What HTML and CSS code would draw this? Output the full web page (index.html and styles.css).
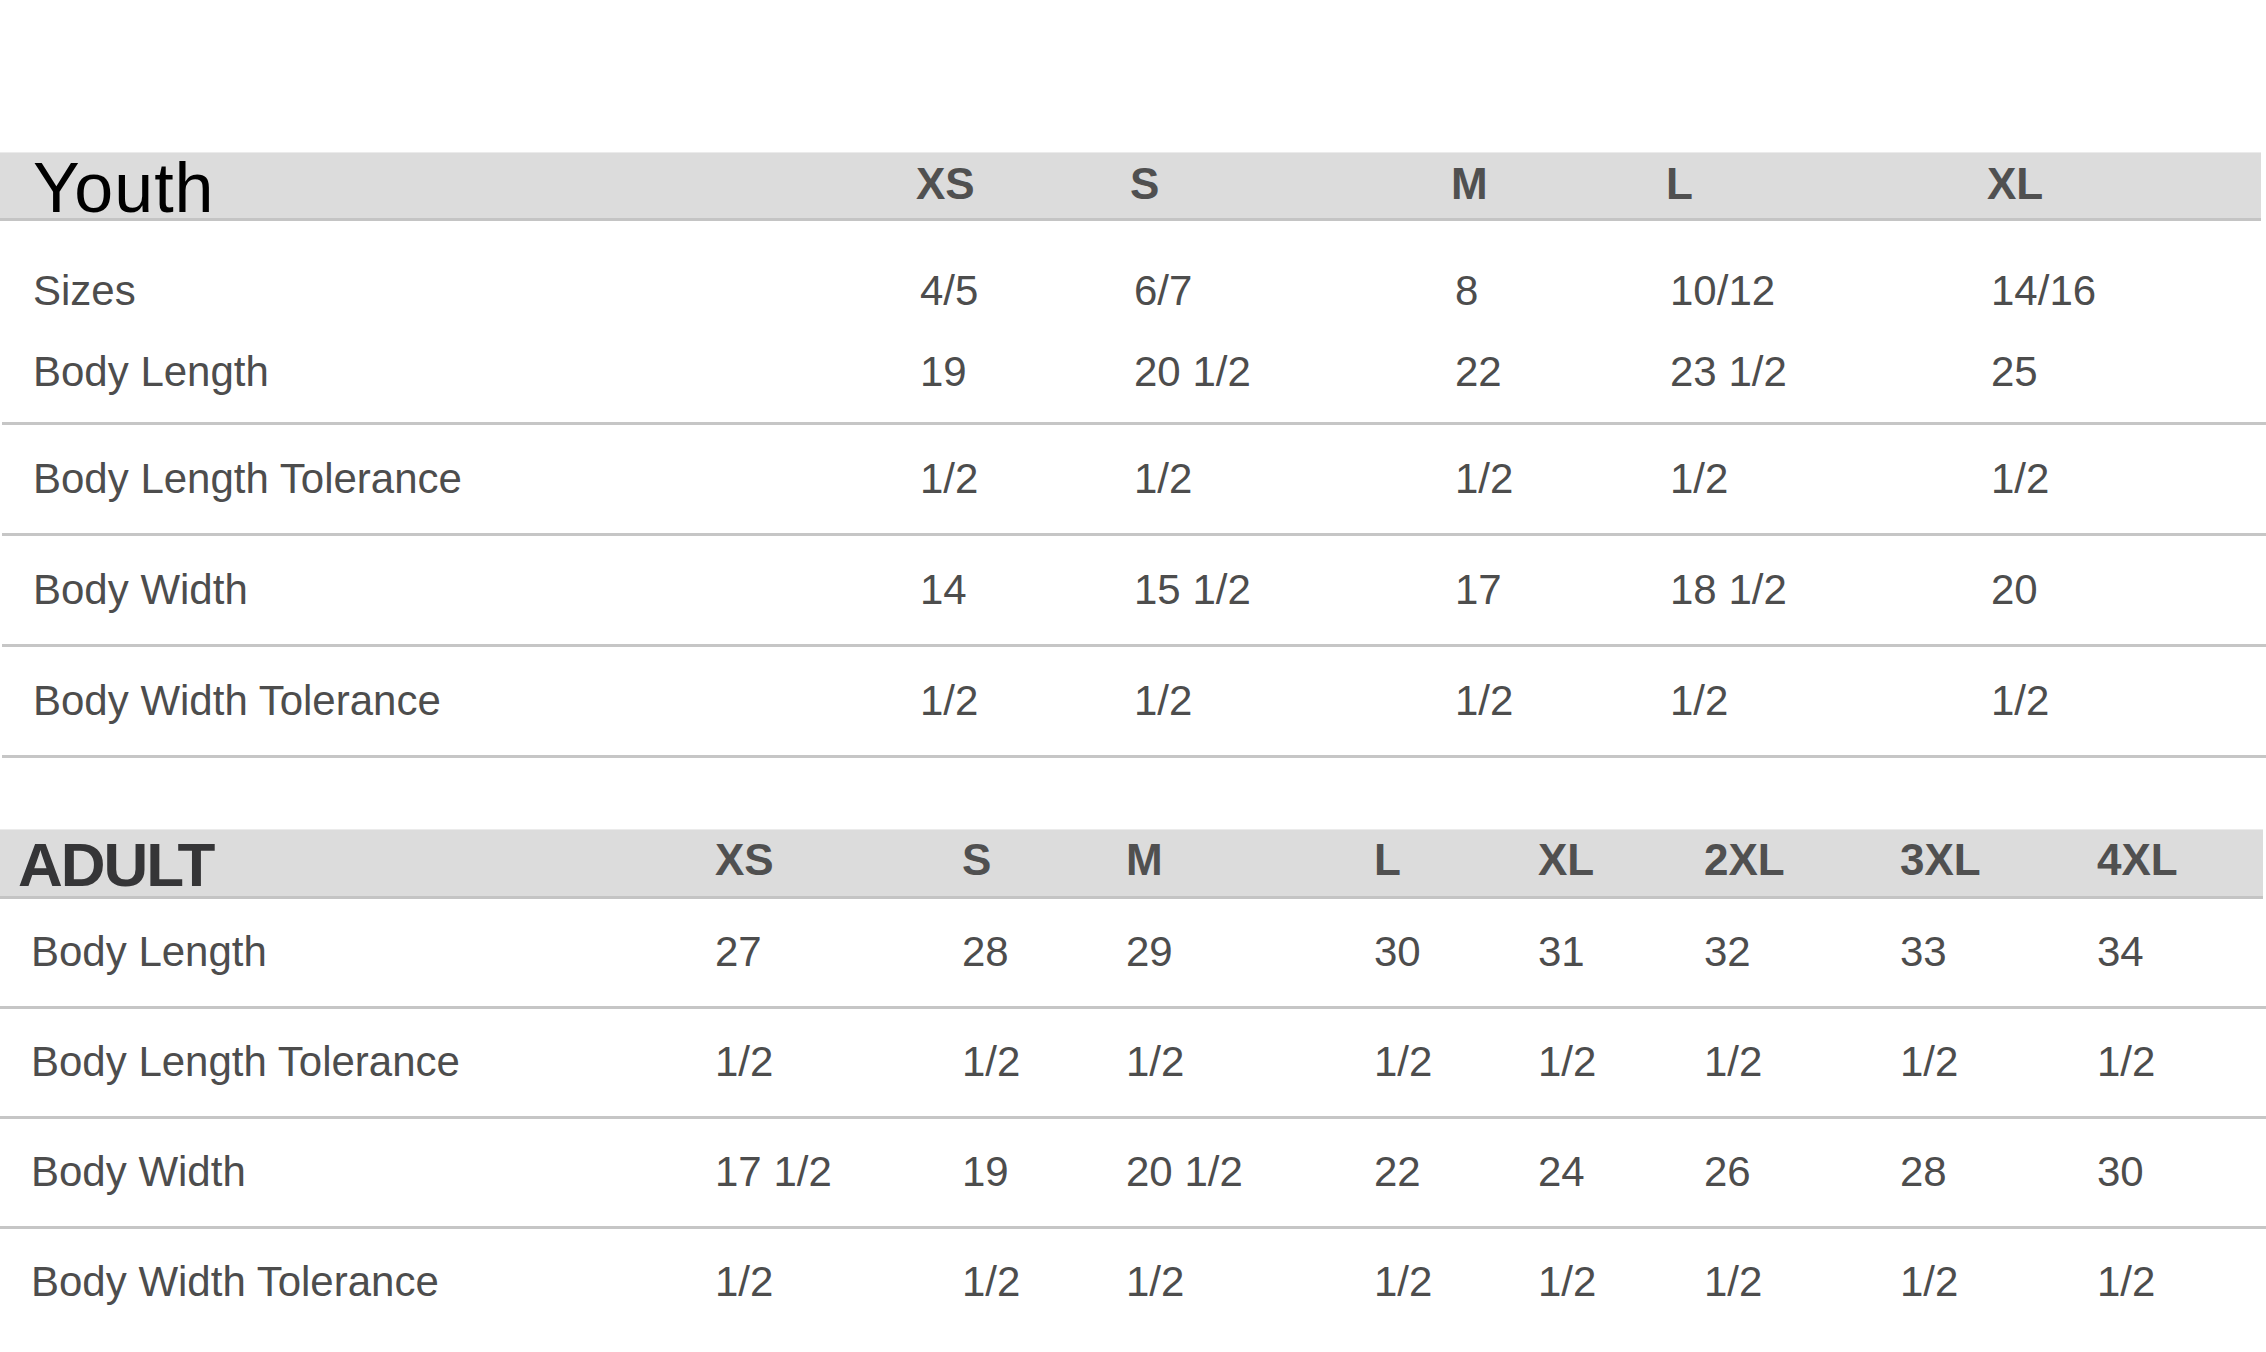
FILE: index.html
```html
<!DOCTYPE html>
<html lang="en">
<head>
<meta charset="utf-8">
<title>Size Chart</title>
<link rel="stylesheet" href="styles.css">
</head>
<body>
<main class="page">
  <section class="chart youth">
    <div class="band y-band">
      <div class="youth-title">Youth</div>
      <div class="hd">XS</div>
      <div class="hd">S</div>
      <div class="hd">M</div>
      <div class="hd">L</div>
      <div class="hd">XL</div>
    </div>
    <div class="y-group">
      <div class="y-row y-cols">
        <div class="lbl">Sizes</div><div class="v">4/5</div><div class="v">6/7</div><div class="v">8</div><div class="v">10/12</div><div class="v">14/16</div>
      </div>
      <div class="y-row y-cols">
        <div class="lbl">Body Length</div><div class="v">19</div><div class="v">20 1/2</div><div class="v">22</div><div class="v">23 1/2</div><div class="v">25</div>
      </div>
    </div>
    <div class="y-ruled y-cols">
      <div class="lbl">Body Length Tolerance</div><div class="v">1/2</div><div class="v">1/2</div><div class="v">1/2</div><div class="v">1/2</div><div class="v">1/2</div>
    </div>
    <div class="y-ruled y-cols">
      <div class="lbl">Body Width</div><div class="v">14</div><div class="v">15 1/2</div><div class="v">17</div><div class="v">18 1/2</div><div class="v">20</div>
    </div>
    <div class="y-ruled y-cols">
      <div class="lbl">Body Width Tolerance</div><div class="v">1/2</div><div class="v">1/2</div><div class="v">1/2</div><div class="v">1/2</div><div class="v">1/2</div>
    </div>
  </section>

  <section class="chart adult">
    <div class="band a-band a-cols">
      <div class="adult-title">ADULT</div>
      <div class="hd">XS</div>
      <div class="hd">S</div>
      <div class="hd">M</div>
      <div class="hd">L</div>
      <div class="hd">XL</div>
      <div class="hd">2XL</div>
      <div class="hd">3XL</div>
      <div class="hd">4XL</div>
    </div>
    <div class="a-row a-cols">
      <div class="lbl">Body Length</div><div class="v">27</div><div class="v">28</div><div class="v">29</div><div class="v">30</div><div class="v">31</div><div class="v">32</div><div class="v">33</div><div class="v">34</div>
    </div>
    <div class="a-row a-cols">
      <div class="lbl">Body Length Tolerance</div><div class="v">1/2</div><div class="v">1/2</div><div class="v">1/2</div><div class="v">1/2</div><div class="v">1/2</div><div class="v">1/2</div><div class="v">1/2</div><div class="v">1/2</div>
    </div>
    <div class="a-row a-cols">
      <div class="lbl">Body Width</div><div class="v">17 1/2</div><div class="v">19</div><div class="v">20 1/2</div><div class="v">22</div><div class="v">24</div><div class="v">26</div><div class="v">28</div><div class="v">30</div>
    </div>
    <div class="a-row a-cols last">
      <div class="lbl">Body Width Tolerance</div><div class="v">1/2</div><div class="v">1/2</div><div class="v">1/2</div><div class="v">1/2</div><div class="v">1/2</div><div class="v">1/2</div><div class="v">1/2</div><div class="v">1/2</div>
    </div>
  </section>
</main>
</body>
</html>
```

FILE: styles.css
```css
html, body {
  margin: 0;
  padding: 0;
  background: #ffffff;
}

body {
  width: 2266px;
  height: 1352px;
  overflow: hidden;
  font-family: "Liberation Sans", Arial, Helvetica, sans-serif;
  color: #4d4d4d;
}

.page {
  display: flex;
  flex-direction: column;
}

/* ---------- header bands ---------- */
.band {
  background: #dcdcdc;
  border-top: 1px solid #ebebeb;
  border-bottom: 3px solid #c4c4c4;
  box-sizing: content-box;
}

.hd {
  font-weight: 700;
  font-size: 44px;
  line-height: 44px;
  color: #505050;
}

/* ---------- Youth table ---------- */
.youth {
  margin-top: 152px;
}

.y-band {
  width: 2261px;
  height: 65px;
  display: grid;
  grid-template-columns: 916px 214px 321px 215px 321px 1fr;
  align-items: start;
}

.y-band .hd {
  padding-top: 9px;
}

.youth-title {
  font-size: 70px;
  line-height: 70px;
  letter-spacing: 1px;
  padding-top: 0;
  padding-left: 33px;
  color: #000000;
  font-weight: 400;
}

.y-cols {
  display: grid;
  grid-template-columns: 914px 214px 321px 215px 321px 1fr;
  margin-left: 2px;
  font-size: 42px;
}

.y-cols .lbl {
  padding-left: 31px;
}

.y-cols .v {
  padding-left: 4px;
}

.y-group {
  margin-left: 2px;
  padding-top: 29px;
  padding-bottom: 10px;
  border-bottom: 3px solid #c6c6c6;
}

.y-group .y-row {
  margin-left: 0;
  line-height: 81px;
}

.y-ruled {
  padding-top: 4px;
  padding-bottom: 4px;
  line-height: 100px;
  border-bottom: 3px solid #c6c6c6;
}

/* ---------- Adult table ---------- */
.adult {
  margin-top: 71px;
}

.a-cols {
  display: grid;
  grid-template-columns: 715px 247px 164px 248px 164px 166px 196px 197px 1fr;
}

.a-band {
  width: 2263px;
  height: 66px;
  align-items: start;
}

.a-band .hd {
  padding-top: 8px;
}

.adult-title {
  font-size: 62px;
  line-height: 62px;
  font-weight: 700;
  letter-spacing: -2px;
  color: #353537;
  padding-top: 4px;
  padding-left: 18px;
}

.a-row {
  font-size: 42px;
  padding-top: 8px;
  padding-bottom: 9px;
  line-height: 90px;
  border-bottom: 3px solid #c6c6c6;
}

.a-row.last {
  border-bottom: none;
}

.a-row .lbl {
  padding-left: 31px;
}
```
